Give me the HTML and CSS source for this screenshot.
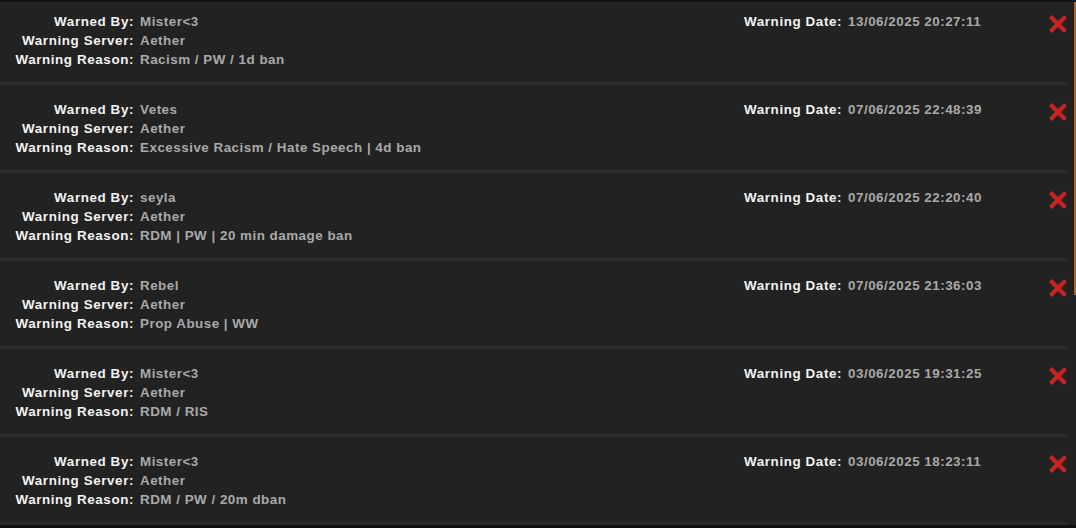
FILE: index.html
```html
<!DOCTYPE html>
<html lang="en">
<head>
<meta charset="UTF-8">
<meta name="viewport" content="width=device-width, initial-scale=1.0">
<title>Warnings</title>
<link rel="stylesheet" href="styles.css">
</head>
<body>

<div class="topline"></div>

<div class="frame">
  <div class="warnings">

    <div class="warning">
      <div class="info">
        <span class="label">Warned By:</span><span class="value">Mister&lt;3</span>
        <span class="label">Warning Server:</span><span class="value">Aether</span>
        <span class="label">Warning Reason:</span><span class="value">Racism / PW / 1d ban</span>
      </div>
      <div class="date">
        <span class="label">Warning Date:</span><span class="value">13/06/2025 20:27:11</span>
      </div>
      <button class="remove" title="Remove warning"><svg viewBox="0 0 18 18"><path d="M0 3 3 0 9 6 15 0 18 3 12 9 18 15 15 18 9 12 3 18 0 15 6 9Z"/></svg></button>
    </div>

    <div class="warning">
      <div class="info">
        <span class="label">Warned By:</span><span class="value">Vetes</span>
        <span class="label">Warning Server:</span><span class="value">Aether</span>
        <span class="label">Warning Reason:</span><span class="value">Excessive Racism / Hate Speech | 4d ban</span>
      </div>
      <div class="date">
        <span class="label">Warning Date:</span><span class="value">07/06/2025 22:48:39</span>
      </div>
      <button class="remove" title="Remove warning"><svg viewBox="0 0 18 18"><path d="M0 3 3 0 9 6 15 0 18 3 12 9 18 15 15 18 9 12 3 18 0 15 6 9Z"/></svg></button>
    </div>

    <div class="warning">
      <div class="info">
        <span class="label">Warned By:</span><span class="value">seyla</span>
        <span class="label">Warning Server:</span><span class="value">Aether</span>
        <span class="label">Warning Reason:</span><span class="value">RDM | PW | 20 min damage ban</span>
      </div>
      <div class="date">
        <span class="label">Warning Date:</span><span class="value">07/06/2025 22:20:40</span>
      </div>
      <button class="remove" title="Remove warning"><svg viewBox="0 0 18 18"><path d="M0 3 3 0 9 6 15 0 18 3 12 9 18 15 15 18 9 12 3 18 0 15 6 9Z"/></svg></button>
    </div>

    <div class="warning">
      <div class="info">
        <span class="label">Warned By:</span><span class="value">Rebel</span>
        <span class="label">Warning Server:</span><span class="value">Aether</span>
        <span class="label">Warning Reason:</span><span class="value">Prop Abuse | WW</span>
      </div>
      <div class="date">
        <span class="label">Warning Date:</span><span class="value">07/06/2025 21:36:03</span>
      </div>
      <button class="remove" title="Remove warning"><svg viewBox="0 0 18 18"><path d="M0 3 3 0 9 6 15 0 18 3 12 9 18 15 15 18 9 12 3 18 0 15 6 9Z"/></svg></button>
    </div>

    <div class="warning">
      <div class="info">
        <span class="label">Warned By:</span><span class="value">Mister&lt;3</span>
        <span class="label">Warning Server:</span><span class="value">Aether</span>
        <span class="label">Warning Reason:</span><span class="value">RDM / RIS</span>
      </div>
      <div class="date">
        <span class="label">Warning Date:</span><span class="value">03/06/2025 19:31:25</span>
      </div>
      <button class="remove" title="Remove warning"><svg viewBox="0 0 18 18"><path d="M0 3 3 0 9 6 15 0 18 3 12 9 18 15 15 18 9 12 3 18 0 15 6 9Z"/></svg></button>
    </div>

    <div class="warning">
      <div class="info">
        <span class="label">Warned By:</span><span class="value">Mister&lt;3</span>
        <span class="label">Warning Server:</span><span class="value">Aether</span>
        <span class="label">Warning Reason:</span><span class="value">RDM / PW / 20m dban</span>
      </div>
      <div class="date">
        <span class="label">Warning Date:</span><span class="value">03/06/2025 18:23:11</span>
      </div>
      <button class="remove" title="Remove warning"><svg viewBox="0 0 18 18"><path d="M0 3 3 0 9 6 15 0 18 3 12 9 18 15 15 18 9 12 3 18 0 15 6 9Z"/></svg></button>
    </div>

  </div>
  <div class="scrollbar"><div class="thumb"></div></div>
</div>

<div class="footer">Warning [</div>

</body>
</html>
```

FILE: styles.css
```css
body {
  margin: 0;
  padding: 0;
  background-color: #111;
  font-family: "Liberation Sans", Arial, sans-serif;
  font-size: 13.4px;
  font-weight: bold;
  letter-spacing: 0.6px;
  overflow: hidden;
}

.topline {
  height: 2px;
  background-color: #131313;
}

.frame {
  display: flex;
  background-color: #222;
}

.warnings {
  flex: 1;
}

.warning {
  display: flex;
  align-items: flex-start;
  padding: 15px 0 13px 0;
  border-bottom: 3px solid #2c2c2c;
}

.warning:first-child {
  padding-top: 10px;
}

.info {
  display: grid;
  grid-template-columns: 134px auto;
  column-gap: 6px;
  width: 744px;
  line-height: 19px;
}

.date {
  display: grid;
  grid-template-columns: auto auto;
  column-gap: 6px;
  line-height: 19px;
  width: 305px;
  align-content: start;
  justify-content: start;
}

.label {
  color: #f2f2f2;
  text-align: right;
}

.value {
  color: #a9a9a9;
  letter-spacing: 0.5px;
}

.remove {
  margin: 3px 0 0 0;
  padding: 0;
  width: 18px;
  height: 18px;
  border: none;
  background: none;
  cursor: pointer;
}

.remove svg {
  display: block;
  width: 18px;
  height: 18px;
  fill: #c62525;
}

.scrollbar {
  width: 9px;
  background-color: #222;
}

.thumb {
  width: 2px;
  height: 293px;
  margin-left: 7px;
  background-color: #b8621d;
}

.footer {
  padding-left: 316px;
  height: 40px;
  line-height: 22px;
  color: #3a3a3a;
}
```
